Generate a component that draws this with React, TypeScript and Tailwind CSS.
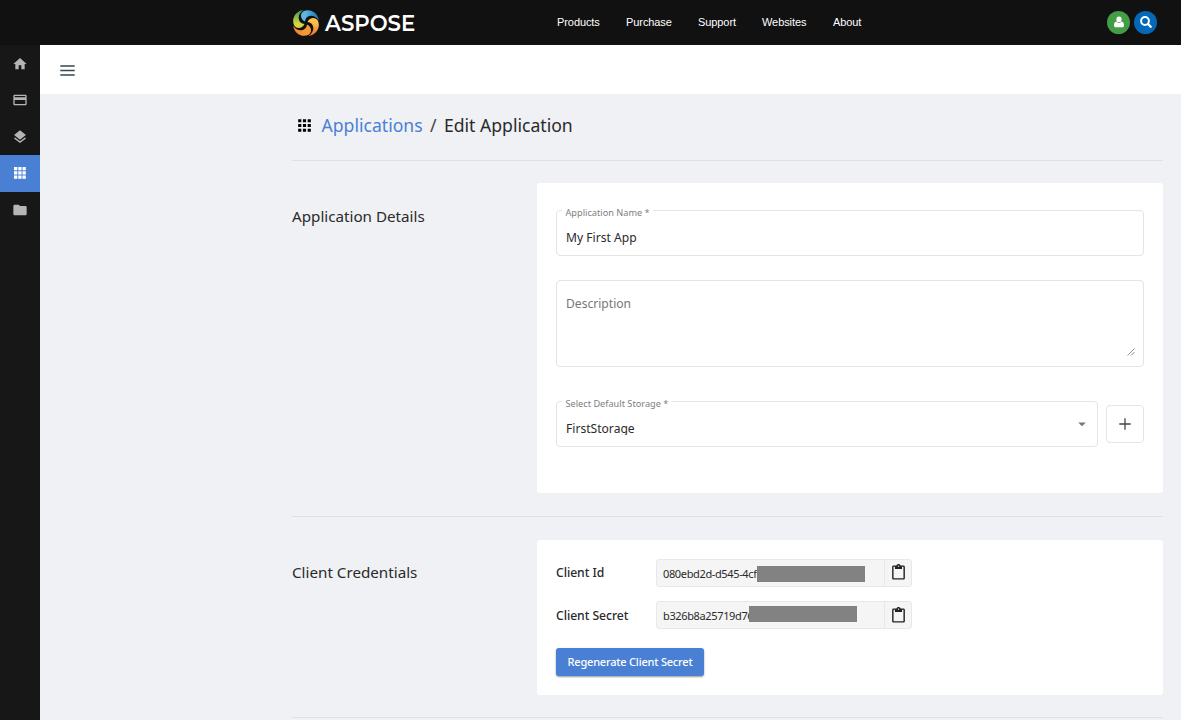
import React from "react";
import {
  MdHome,
  MdCreditCard,
  MdLayers,
  MdFolder,
  MdApps,
  MdContentPaste,
  MdArrowDropDown,
} from "react-icons/md";

const blades = [
  { id: "blue", angle: 0, from: "#5db6e4", to: "#1d6fae" },
  { id: "orange", angle: 90, from: "#fbc04e", to: "#e8722a" },
  { id: "yellow", angle: 180, from: "#f59a33", to: "#f08030" },
  { id: "green", angle: 270, from: "#d3d544", to: "#3f9a54" },
];

function LogoMark() {
  return (
    <svg width="28" height="28" viewBox="-14 -14 28 28">
      <defs>
        {blades.map((b) => (
          <linearGradient key={b.id} id={b.id} x1="0" y1="0" x2="1" y2="0">
            <stop offset=".25" stopColor={b.from} />
            <stop offset="1" stopColor={b.to} />
          </linearGradient>
        ))}
      </defs>
      {blades.map((b) => (
        <g key={b.id} transform={`rotate(${b.angle})`}>
          <path
            d="M-1 -1.500C-5.800 -3.500 -6.300 -9.500 -2.500 -11.800C4 -15 12 -10.500 12.900 -2.500C10.500 -6.300 7 -7.800 4 -7.200C1.200 -6.600 -.6 -4.800 -1 -1.500Z"
            fill={`url(#${b.id})`}
          />
        </g>
      ))}
    </svg>
  );
}

function GridIcon() {
  return (
    <svg width="12" height="12" viewBox="0 0 12 12" fill="#fff">
      {[0, 4.25, 8.5].map((y) =>
        [0, 4.25, 8.5].map((x) => (
          <rect key={`${x}-${y}`} x={x} y={y} width="3.3" height="3.3" />
        ))
      )}
    </svg>
  );
}

function Header() {
  return (
    <header className="flex h-[45px] shrink-0 items-center bg-[#111111]">
      <div className="ml-[292px] flex w-[257px] shrink-0 items-center">
        <LogoMark />
        <span className="ml-[5px] mt-[2px] font-['Montserrat','Lato',sans-serif] text-[21.300px] font-semibold leading-none tracking-[-0.050px] text-white">
          ASPOSE
        </span>
      </div>
      <nav className="ml-2 flex grow gap-[27px] pb-px font-['Liberation_Sans',Arial,sans-serif] text-[11px] tracking-[-0.080px] text-white">
        <a className="w-[42px] whitespace-nowrap">Products</a>
        <a className="w-[45px] whitespace-nowrap">Purchase</a>
        <a className="w-[37px] whitespace-nowrap">Support</a>
        <a className="w-[44px] whitespace-nowrap">Websites</a>
        <a className="whitespace-nowrap">About</a>
      </nav>
      <div className="mr-6 flex gap-1 pb-px">
        <span className="flex size-[23px] items-center justify-center rounded-full bg-[#459c46]">
          <svg width="10" height="12" viewBox="0 0 10 12" fill="#fff">
            <ellipse cx="5" cy="3.4" rx="2.6" ry="2.9" />
            <path d="M2.3 5.4C.8 5.8 0 7.4 0 9.2C0 10.6 .7 11.3 2 11.3H8C9.3 11.3 10 10.6 10 9.2C10 7.4 9.2 5.800 7.700 5.400C7 6.300 6 6.900 5 6.900C4 6.900 3 6.300 2.300 5.400Z" />
          </svg>
        </span>
        <span className="flex size-[23px] items-center justify-center rounded-full bg-[#0468b8]">
          <svg width="12" height="12" viewBox="0 0 12 12" fill="none" stroke="#fff" strokeLinecap="round">
            <circle cx="5" cy="5" r="3.9" strokeWidth="2" />
            <path d="M8.200 8.200L10.700 10.700" strokeWidth="2.300" />
          </svg>
        </span>
      </div>
    </header>
  );
}

function Sidebar() {
  const item = "flex h-[36.700px] items-center justify-center pt-[0.500px]";
  return (
    <aside className="w-10 shrink-0 bg-[#171717] text-[#b5b5b5]">
      <div className={item}><MdHome size={16} /></div>
      <div className={item}><MdCreditCard size={16} /></div>
      <div className={item}><MdLayers size={16} /></div>
      <div className="flex h-[36.700px] items-center justify-center bg-[#4a80d4]"><GridIcon /></div>
      <div className={item}><MdFolder size={16} /></div>
    </aside>
  );
}

function FloatLabel({ children }: { children: React.ReactNode }) {
  return (
    <span className="absolute -top-[5px] left-[5px] h-[13px] overflow-hidden whitespace-nowrap bg-white px-[3.500px] text-[9.200px] leading-[14px] text-[#808080]">
      {children}
    </span>
  );
}

function Credential({ label, value, cover }: { label: string; value: string; cover: string }) {
  return (
    <div className="flex h-7 items-center">
      <span className="w-[100px] pt-[2px] text-[12.200px] font-medium tracking-[-0.050px] text-[#2a2a2a]">{label}</span>
      <div className="relative flex h-7 w-[256px] rounded-[3px] border border-[#e8e8e8] bg-[#f5f5f5]">
        <span className="grow overflow-hidden whitespace-nowrap pl-[6px] text-[11px] leading-[27px] tracking-[-0.360px] text-[#2a2a2a]">
          {value}
        </span>
        <span className="flex w-[27px] items-center justify-center border-l border-[#e8e8e8] text-[#222]">
          <MdContentPaste size={17} />
        </span>
        <span className={cover} />
      </div>
    </div>
  );
}

export default function App() {
  return (
    <div className="flex h-[720px] w-[1181px] flex-col overflow-hidden bg-[#f0f1f5] font-['Noto_Sans',sans-serif] text-[#2a2a2a]">
      <Header />
      <div className="flex min-h-0 grow">
        <Sidebar />
        <div className="flex grow flex-col">
          <div className="flex h-[49px] shrink-0 items-center bg-white pl-5">
            <svg width="15" height="11" viewBox="0 0 15 11" stroke="#37474f" strokeWidth="1.300" className="mt-[2px]">
              <path d="M.300 1H14.700M.300 5.500H14.700M.300 10H14.700" />
            </svg>
          </div>
          <main className="flex flex-col pl-[252px] pr-[18px]">
            <h1 className="flex h-[67px] items-center border-b border-[#dfe1e6] pb-[3px] pl-[3px] text-[17.600px]">
              <MdApps size={19} className="mb-px text-black" />
              <span className="ml-[7.500px] text-[#4a7fd4]">Applications</span>
              <span className="mx-[7.400px] text-[#444]">/</span>
              <span>Edit Application</span>
            </h1>

            <section className="flex h-[356px] shrink-0 border-b border-[#dfe1e6] pt-[22px]">
              <h2 className="w-[245px] shrink-0 pt-[22px] text-[15.200px] leading-[22px]">Application Details</h2>
              <div className="flex h-[310px] grow flex-col rounded-[3px] bg-white px-[19px] pt-[27px] text-[12.100px]">
                <div className="relative h-[46px] shrink-0 rounded-[4px] border border-[#e4e4e4] pl-[9px] pt-[18px] leading-[18px]">
                  <FloatLabel>Application Name *</FloatLabel>
                  My First App
                </div>
                <div className="relative mt-6 h-[87px] shrink-0 rounded-[4px] border border-[#e4e4e4] pl-[9px] pt-[14px] leading-[18px] text-[#777]">
                  Description
                  <svg width="8" height="8" viewBox="0 0 8 8" stroke="#777" strokeWidth=".8" className="absolute bottom-[10px] right-2">
                    <path d="M.5 7.500L7.500.5M4 7.500L7.500 4" />
                  </svg>
                </div>
                <div className="mt-[34px] flex items-center gap-2">
                  <div className="relative flex h-[46px] grow justify-between rounded-[4px] border border-[#e4e4e4] pl-[9px] pr-[6.500px] leading-[18px]">
                    <FloatLabel>Select Default Storage *</FloatLabel>
                    <span className="mt-[18px] h-[15px] overflow-hidden">FirstStorage</span>
                    <MdArrowDropDown size={18} className="mt-[13px] text-[#777]" />
                  </div>
                  <div className="flex size-[38px] items-center justify-center rounded-[4px] border border-[#e4e4e4]">
                    <svg width="12" height="12" viewBox="0 0 12 12" stroke="#444" strokeWidth="1.300">
                      <path d="M6 .3V11.700M.3 6H11.700" />
                    </svg>
                  </div>
                </div>
              </div>
            </section>

            <section className="flex h-[201px] shrink-0 border-b border-[#dfe1e6] pt-[23px]">
              <h2 className="w-[245px] shrink-0 pt-[21px] text-[15.200px] leading-[22px]">Client Credentials</h2>
              <div className="flex h-[155px] grow flex-col items-start rounded-[3px] bg-white px-[19px] pt-[18.500px]">
                <Credential
                  label="Client Id"
                  value="080ebd2d-d545-4cf"
                  cover="absolute left-[100px] top-[6px] h-4 w-[108px] bg-[#828282]"
                />
                <div className="h-[14.500px]" />
                <Credential
                  label="Client Secret"
                  value="b326b8a25719d76"
                  cover="absolute left-[92px] top-[4px] h-4 w-[108px] bg-[#828282]"
                />
                <button className="mt-[19px] flex h-[28px] w-[148px] items-center justify-center whitespace-nowrap rounded-[3px] bg-[#4a80d4] text-[11px] font-medium tracking-[-0.200px] text-white shadow-[0_1px_2px_rgba(0,0,0,0.400)]">
                  Regenerate Client Secret
                </button>
              </div>
            </section>
          </main>
        </div>
      </div>
    </div>
  );
}
